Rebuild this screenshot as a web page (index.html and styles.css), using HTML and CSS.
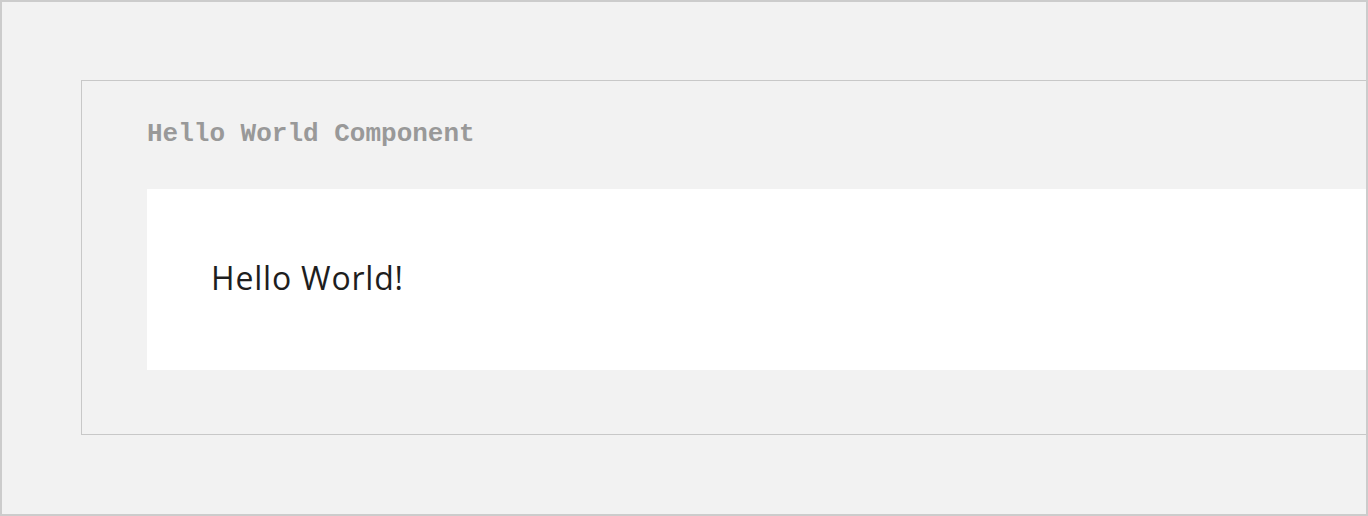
FILE: index.html
```html
<!DOCTYPE html>
<html>
<head>
<meta charset="utf-8">
<link rel="stylesheet" href="styles.css">
</head>
<body>
<div class="frame">
  <div class="panel">
    <div class="panel-title">Hello World Component</div>
    <div class="card">
      <div class="greeting">Hello World!</div>
    </div>
  </div>
</div>
</body>
</html>
```
FILE: styles.css
```css
html, body {
  margin: 0;
  padding: 0;
}
body {
  width: 1368px;
  height: 516px;
  overflow: hidden;
  background: #f2f2f2;
}
.frame {
  box-sizing: border-box;
  width: 1368px;
  height: 516px;
  border: 2px solid #cccccc;
  background: #f2f2f2;
  padding: 78px 0 0 79px;
  overflow: hidden;
}
.panel {
  box-sizing: border-box;
  width: 1400px;
  border: 1px solid #c8c8c8;
  padding: 38px 0 64px 65px;
}
.panel-title {
  font-family: "Liberation Mono", "Courier New", monospace;
  font-weight: bold;
  font-size: 26px;
  line-height: 30px;
  color: #999999;
  margin-bottom: 40px;
}
.card {
  background: #ffffff;
  height: 181px;
  box-sizing: border-box;
  padding: 64px 0 0 64px;
}
.greeting {
  font-family: "Open Sans", "Noto Sans", sans-serif;
  font-size: 32px;
  line-height: 50px;
  letter-spacing: 0.8px;
  color: #1e1e1e;
}
```
